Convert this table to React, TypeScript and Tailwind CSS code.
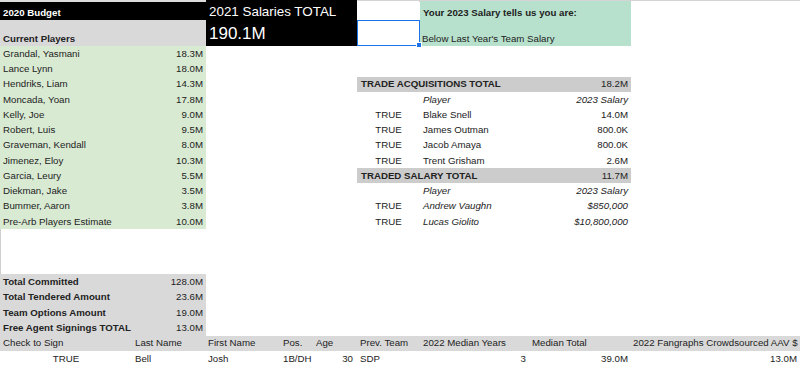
import React from 'react';

// Spreadsheet column grid (px): A B C D E F G H I
const cols = 'grid-cols-[132px_74px_74px_33px_44px_63px_109px_102px_169px]';
const rows = 'grid-rows-[2px_18px_26px_repeat(12,15.25px)_repeat(3,15px)_repeat(5,15.4px)_15px]';

type CellProps = {
  c: string;
  r: string;
  className?: string;
  children?: React.ReactNode;
};

const Cell: React.FC<CellProps> = ({ c, r, className = '', children }) => (
  <div className={`${c} ${r} flex items-center min-w-0 overflow-hidden whitespace-nowrap ${className}`}>
    {children}
  </div>
);

const players: [string, string][] = [
  ['Grandal, Yasmani', '18.3M'],
  ['Lance Lynn', '18.0M'],
  ['Hendriks, Liam', '14.3M'],
  ['Moncada, Yoan', '17.8M'],
  ['Kelly, Joe', '9.0M'],
  ['Robert, Luis', '9.5M'],
  ['Graveman, Kendall', '8.0M'],
  ['Jimenez, Eloy', '10.3M'],
  ['Garcia, Leury', '5.5M'],
  ['Diekman, Jake', '3.5M'],
  ['Bummer, Aaron', '3.8M'],
  ['Pre-Arb Players Estimate', '10.0M'],
];

const playerRows = [
  'row-start-4', 'row-start-5', 'row-start-6', 'row-start-7', 'row-start-8', 'row-start-9',
  'row-start-10', 'row-start-11', 'row-start-12', 'row-start-13', 'row-start-14', 'row-start-15',
];

const totals: [string, string, string][] = [
  ['Total Committed', '128.0M', 'row-start-19'],
  ['Total Tendered Amount', '23.6M', 'row-start-20'],
  ['Team Options Amount', '19.0M', 'row-start-21'],
  ['Free Agent Signings TOTAL', '13.0M', 'row-start-22'],
];

const acquired: [string, string, string][] = [
  ['Blake Snell', '14.0M', 'row-start-8'],
  ['James Outman', '800.0K', 'row-start-9'],
  ['Jacob Amaya', '800.0K', 'row-start-10'],
  ['Trent Grisham', '2.6M', 'row-start-11'],
];

const traded: [string, string, string][] = [
  ['Andrew Vaughn', '$850,000', 'row-start-14'],
  ['Lucas Giolito', '$10,800,000', 'row-start-15'],
];

export default function App() {
  return (
    <div
      className={`grid ${cols} ${rows} w-[800px] h-[366px] overflow-hidden bg-white text-[9.7px] leading-none text-[#222]`}
      style={{ fontFamily: '"Liberation Sans", Arial, sans-serif' }}
    >
      {/* thin top row with gridlines */}
      <Cell c="col-start-1 col-span-2" r="row-start-1" className="bg-[#dcdcdc]" />
      <Cell c="col-start-6" r="row-start-1" className="border-t border-r border-[#d4d4d4]" />
      <Cell c="col-start-7" r="row-start-1" className="border-t border-r border-[#d4d4d4] bg-[#b7e1cd]" />
      <Cell c="col-start-8" r="row-start-1" className="border-t border-r border-[#d4d4d4] bg-[#b7e1cd]" />
      <Cell c="col-start-9" r="row-start-1" className="border-t border-[#d4d4d4]" />

      {/* 2020 Budget header */}
      <Cell c="col-start-1 col-span-2" r="row-start-2" className="bg-black text-white font-bold items-end pb-[2px] pl-[3px] leading-[10px]">
        2020 Budget
      </Cell>
      <Cell c="col-start-1 col-span-2" r="row-start-3" className="bg-[#d9d9d9] font-bold items-end pb-[2px] pl-[3px] leading-[11px]">
        Current Players
      </Cell>

      {/* 2021 Salaries total block */}
      <Cell c="col-start-3 col-span-3" r="row-start-1" className="bg-black" />
      <Cell c="col-start-3 col-span-3" r="row-start-2" className="bg-black text-white text-[13.4px] items-end pb-[1px] pl-[3px] leading-[15px]">
        2021 Salaries TOTAL
      </Cell>
      <Cell c="col-start-3 col-span-3" r="row-start-3" className="bg-black text-white text-[17px] items-end pb-[3px] pl-[3px] leading-[18px]">
        190.1M
      </Cell>

      {/* selected cell */}
      <div className="col-start-6 row-start-3 relative">
        <div className="h-full w-full border-[1.5px] border-[#1a73e8]" />
        <div className="absolute right-[-2px] bottom-[-2px] w-[4px] h-[4px] bg-[#1a73e8] border border-white box-content" />
      </div>

      {/* salary verdict */}
      <Cell c="col-start-7 col-span-2" r="row-start-2" className="bg-[#b7e1cd] font-bold items-end pb-[2px] pl-[3px] leading-[11px]">
        Your 2023 Salary tells us you are:
      </Cell>
      <Cell c="col-start-7 col-span-2" r="row-start-3" className="bg-[#b7e1cd] items-end pb-[2px] pl-[2px] leading-[11px]">
        Below Last Year's Team Salary
      </Cell>

      {/* current players */}
      {players.map(([name, amt], i) => (
        <React.Fragment key={name}>
          <Cell c="col-start-1" r={playerRows[i]} className="bg-[#d9ead3] pl-[3px]">
            {name}
          </Cell>
          <Cell c="col-start-2" r={playerRows[i]} className="bg-[#d9ead3] justify-end pr-[3px]">
            {amt}
          </Cell>
        </React.Fragment>
      ))}

      {/* blank rows edge line */}
      <div className="col-start-1 row-start-16 row-span-3 border-l border-[#cfcfcf]" />

      {/* trade acquisitions */}
      <Cell c="col-start-6 col-span-2" r="row-start-6" className="bg-[#cccccc] font-bold pl-[4px]">
        TRADE ACQUISITIONS TOTAL
      </Cell>
      <Cell c="col-start-8" r="row-start-6" className="bg-[#cccccc] justify-end pr-[3px]">
        18.2M
      </Cell>
      <Cell c="col-start-7" r="row-start-7" className="italic pl-[3px]">Player</Cell>
      <Cell c="col-start-8" r="row-start-7" className="italic justify-end pr-[3px]">2023 Salary</Cell>
      {acquired.map(([name, amt, r]) => (
        <React.Fragment key={name}>
          <Cell c="col-start-6" r={r} className="justify-center">TRUE</Cell>
          <Cell c="col-start-7" r={r} className="pl-[3px]">{name}</Cell>
          <Cell c="col-start-8" r={r} className="justify-end pr-[3px]">{amt}</Cell>
        </React.Fragment>
      ))}

      {/* traded salary */}
      <Cell c="col-start-6 col-span-2" r="row-start-12" className="bg-[#cccccc] font-bold pl-[4px]">
        TRADED SALARY TOTAL
      </Cell>
      <Cell c="col-start-8" r="row-start-12" className="bg-[#cccccc] justify-end pr-[3px]">
        11.7M
      </Cell>
      <Cell c="col-start-7" r="row-start-13" className="italic pl-[3px]">Player</Cell>
      <Cell c="col-start-8" r="row-start-13" className="italic justify-end pr-[3px]">2023 Salary</Cell>
      {traded.map(([name, amt, r]) => (
        <React.Fragment key={name}>
          <Cell c="col-start-6" r={r} className="justify-center">TRUE</Cell>
          <Cell c="col-start-7" r={r} className="italic pl-[3px]">{name}</Cell>
          <Cell c="col-start-8" r={r} className="italic justify-end pr-[3px]">{amt}</Cell>
        </React.Fragment>
      ))}

      {/* totals */}
      {totals.map(([label, amt, r]) => (
        <React.Fragment key={label}>
          <Cell c="col-start-1" r={r} className="bg-[#d9d9d9] font-bold pl-[3px] overflow-visible">{label}</Cell>
          <Cell c="col-start-2" r={r} className="bg-[#d9d9d9] justify-end pr-[3px]">{amt}</Cell>
        </React.Fragment>
      ))}

      {/* free agent table header */}
      <Cell c="col-start-1" r="row-start-23" className="bg-[#d9d9d9] pl-[3px]">Check to Sign</Cell>
      <Cell c="col-start-2" r="row-start-23" className="bg-[#d9d9d9] pl-[3px]">Last Name</Cell>
      <Cell c="col-start-3" r="row-start-23" className="bg-[#d9d9d9] pl-[2px]">First Name</Cell>
      <Cell c="col-start-4" r="row-start-23" className="bg-[#d9d9d9] pl-[3px]">Pos.</Cell>
      <Cell c="col-start-5" r="row-start-23" className="bg-[#d9d9d9] pl-[3px]">Age</Cell>
      <Cell c="col-start-6" r="row-start-23" className="bg-[#d9d9d9] pl-[3px]">Prev. Team</Cell>
      <Cell c="col-start-7" r="row-start-23" className="bg-[#d9d9d9] pl-[3px]">2022 Median Years</Cell>
      <Cell c="col-start-8" r="row-start-23" className="bg-[#d9d9d9] pl-[3px]">Median Total</Cell>
      <Cell c="col-start-9" r="row-start-23" className="bg-[#d9d9d9] pl-[2px]">2022 Fangraphs Crowdsourced AAV $</Cell>

      {/* free agent row */}
      <Cell c="col-start-1" r="row-start-24" className="justify-center">TRUE</Cell>
      <Cell c="col-start-2" r="row-start-24" className="pl-[3px]">Bell</Cell>
      <Cell c="col-start-3" r="row-start-24" className="pl-[2px]">Josh</Cell>
      <Cell c="col-start-4" r="row-start-24" className="pl-[3px]">1B/DH</Cell>
      <Cell c="col-start-5" r="row-start-24" className="justify-end pr-[4px]">30</Cell>
      <Cell c="col-start-6" r="row-start-24" className="pl-[3px]">SDP</Cell>
      <Cell c="col-start-7" r="row-start-24" className="justify-end pr-[3px]">3</Cell>
      <Cell c="col-start-8" r="row-start-24" className="justify-end pr-[3px]">39.0M</Cell>
      <Cell c="col-start-9" r="row-start-24" className="justify-end pr-[3px]">13.0M</Cell>
    </div>
  );
}
